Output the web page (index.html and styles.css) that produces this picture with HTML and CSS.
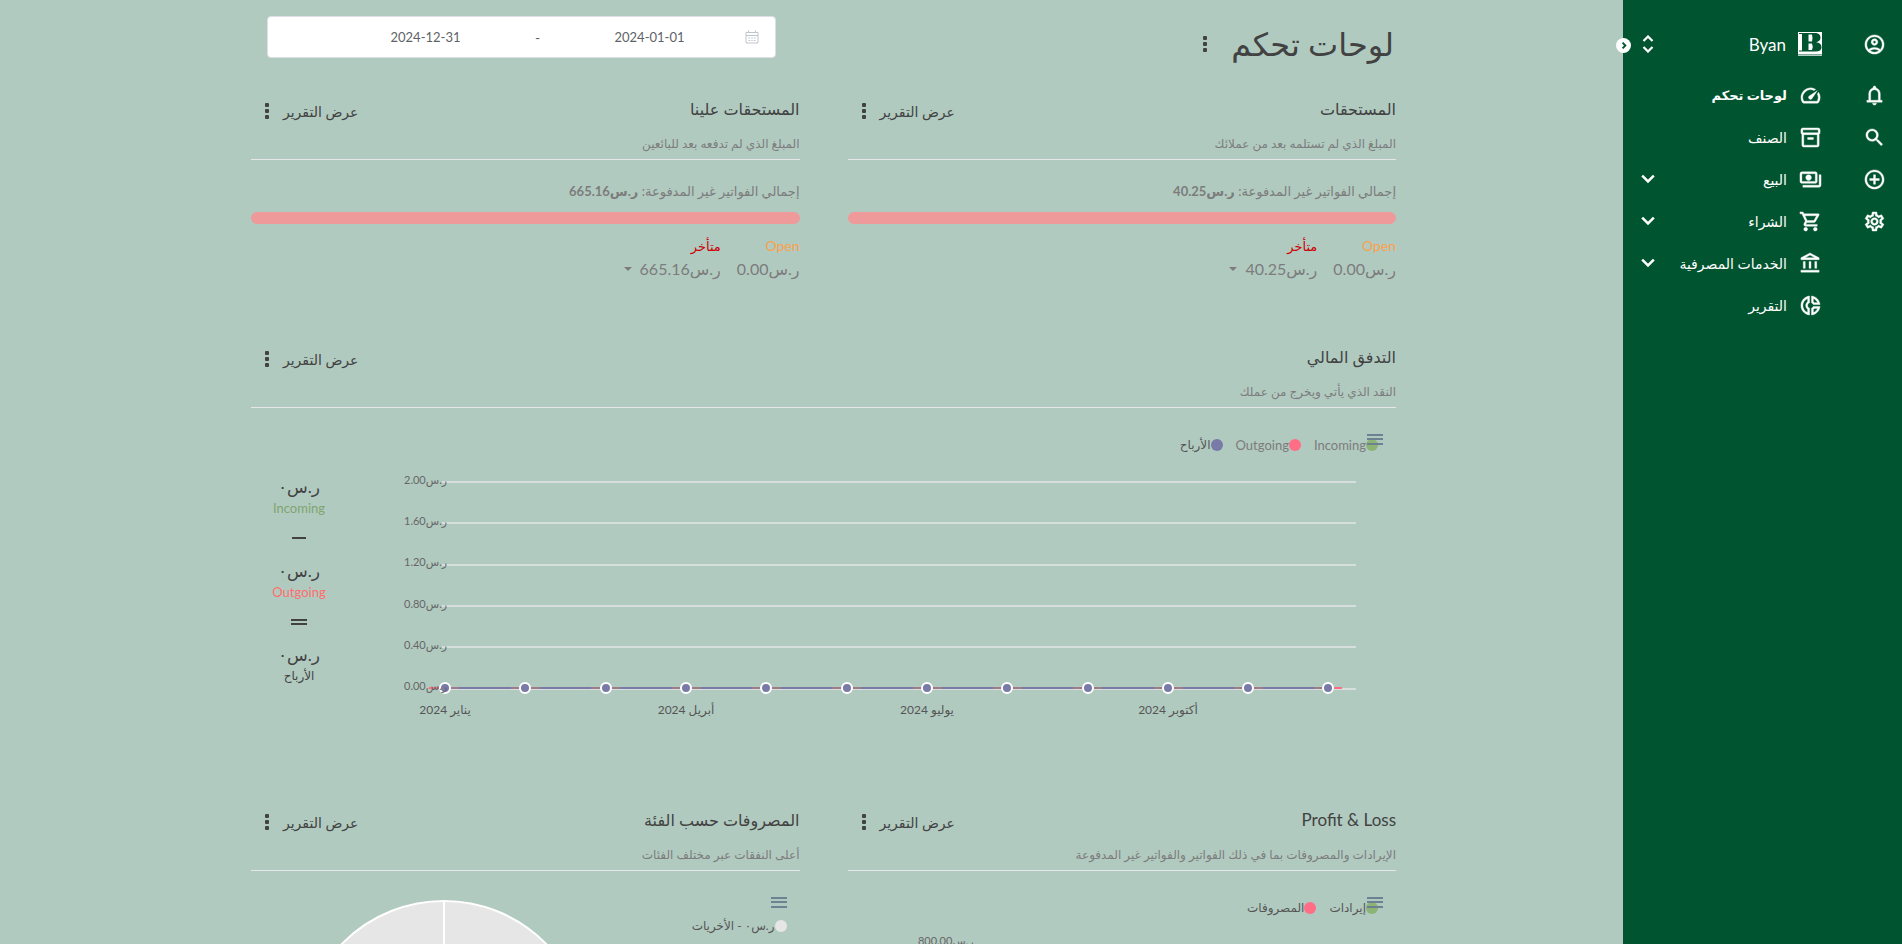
FILE: index.html
```html
<!DOCTYPE html>
<html lang="ar" dir="rtl">
<head>
<meta charset="utf-8">
<title>لوحات تحكم</title>
<link rel="stylesheet" href="styles.css">
</head>
<body>
<aside class="sidebar">
  <div class="rail">
    <button class="rail-btn account" aria-label="الحساب"><svg class="icon" viewBox="0 0 24 24"><path d="M12 2C6.48 2 2 6.48 2 12s4.48 10 10 10 10-4.48 10-10S17.52 2 12 2zM7.35 18.5C8.66 17.56 10.26 17 12 17s3.34.56 4.65 1.5c-1.31.94-2.91 1.5-4.65 1.5s-3.34-.56-4.65-1.5zm10.79-1.38C16.45 15.8 14.32 15 12 15s-4.45.8-6.14 2.12C4.7 15.73 4 13.95 4 12c0-4.42 3.58-8 8-8s8 3.58 8 8c0 1.95-.7 3.73-1.86 5.12zM12 6c-1.93 0-3.5 1.57-3.5 3.5S10.07 13 12 13s3.5-1.57 3.5-3.5S13.93 6 12 6zm0 5c-.83 0-1.5-.67-1.5-1.5S11.17 8 12 8s1.5.67 1.5 1.5S12.83 11 12 11z"/></svg></button>
    <button class="rail-btn" aria-label="الإشعارات"><svg class="icon" viewBox="0 0 24 24"><path d="M12 22c1.1 0 2-.9 2-2h-4c0 1.1.9 2 2 2zM18 17v-7c0-2.790-1.910-5.140-4.500-5.800V3.500c0-.83-.67-1.500-1.500-1.500s-1.500.67-1.500 1.500v.7C7.910 4.860 6 7.210 6 10v7H4v2h16v-2h-2zm-2 0H8v-7c0-2.210 1.790-4 4-4s4 1.790 4 4v7z"/></svg></button>
    <button class="rail-btn" aria-label="بحث"><svg class="icon" viewBox="0 0 24 24"><path d="M15.500 14h-.79l-.28-.27A6.471 6.471 0 0 0 16 9.500 6.500 6.500 0 1 0 9.500 16c1.610 0 3.090-.59 4.230-1.570l.27.280v.79l5 4.990L20.490 19l-4.990-5zm-6 0C7.010 14 5 11.990 5 9.500S7.010 5 9.500 5 14 7.010 14 9.500 11.990 14 9.500 14z"/></svg></button>
    <button class="rail-btn" aria-label="إضافة"><svg class="icon" viewBox="0 0 24 24"><path d="M13 7h-2v4H7v2h4v4h2v-4h4v-2h-4V7zm-1-5C6.480 2 2 6.480 2 12s4.480 10 10 10 10-4.480 10-10S17.520 2 12 2zm0 18c-4.410 0-8-3.590-8-8s3.590-8 8-8 8 3.590 8 8-3.590 8-8 8z"/></svg></button>
    <button class="rail-btn" aria-label="الإعدادات"><svg class="icon" viewBox="0 0 24 24"><path d="M19.430 12.980c.04-.32.07-.64.07-.98 0-.34-.03-.66-.07-.98l2.110-1.650c.19-.15.24-.42.12-.64l-2-3.460c-.09-.16-.26-.25-.44-.25-.06 0-.12.01-.17.03l-2.490 1c-.52-.4-1.080-.73-1.690-.98l-.38-2.650C14.460 2.180 14.250 2 14 2h-4c-.25 0-.46.18-.49.42l-.38 2.650c-.61.25-1.170.59-1.690.98l-2.490-1c-.06-.02-.12-.03-.18-.03-.17 0-.34.09-.43.25l-2 3.460c-.13.22-.07.49.12.64l2.110 1.650c-.04.32-.07.65-.07.98 0 .33.03.66.07.98l-2.110 1.650c-.19.15-.24.42-.12.64l2 3.460c.09.16.26.25.44.25.06 0 .12-.01.17-.03l2.490-1c.52.4 1.080.73 1.690.98l.38 2.650c.03.24.24.42.49.42h4c.25 0 .46-.18.49-.42l.38-2.650c.61-.25 1.170-.59 1.690-.98l2.490 1c.06.02.12.03.18.03.17 0 .34-.09.43-.25l2-3.460c.12-.22.07-.49-.12-.64l-2.110-1.650zm-1.980-1.710c.04.31.05.52.05.73 0 .21-.02.43-.05.73l-.14 1.130.89.7 1.080.84-.7 1.210-1.270-.51-1.040-.42-.9.68c-.43.32-.84.56-1.250.73l-1.060.43-.16 1.130-.2 1.350h-1.400l-.19-1.350-.16-1.130-1.060-.43c-.43-.18-.83-.41-1.230-.71l-.91-.7-1.060.43-1.270.51-.7-1.210 1.080-.84.89-.7-.14-1.130c-.03-.31-.05-.54-.05-.74s.02-.43.05-.73l.14-1.130-.89-.7-1.080-.84.7-1.210 1.270.51 1.040.42.9-.68c.43-.32.84-.56 1.250-.73l1.060-.43.16-1.130.2-1.350h1.390l.19 1.350.16 1.130 1.060.43c.43.18.83.41 1.230.71l.91.7 1.060-.43 1.270-.51.7 1.210-1.070.85-.89.7.14 1.130zM12 8c-2.210 0-4 1.790-4 4s1.790 4 4 4 4-1.790 4-4-1.790-4-4-4zm0 6c-1.100 0-2-.9-2-2s.9-2 2-2 2 .9 2 2-.9 2-2 2z"/></svg></button>
  </div>
  <div class="menu">
    <button class="company">
      <svg class="logo" viewBox="0 0 24 24"><path class="tile" d="M0 0H24V24H0z"/><path class="letter" d="M1 1H17C21 1 22.500 3.200 22.500 5.700S20.500 9.800 18 10.300C21.500 10.700 23.500 12.500 23.500 15.200S21.500 19.500 17.500 19.500H1V18.500H4V2H1z"/><path class="tile" d="M10.500 2.500H14Q15 6 14 9.500H10.500zM10.500 11.500H14Q15.500 15 14 18H10.500z"/><path class="letter" d="M0 22.500H24V23.300H0z"/></svg>
      <span class="company-name">Byan</span>
      <svg class="unfold" viewBox="0 0 24 24"><path d="M6 8l6-6 6 6M6 16l6 6 6-6"/></svg>
    </button>
    <nav class="nav">
      <a class="nav-link current" href="#"><svg class="icon" viewBox="0 0 24 24"><path d="M20.380 8.570l-1.230 1.850a8 8 0 0 1-.22 7.580H5.070A8 8 0 0 1 15.580 6.850l1.850-1.230A10 10 0 0 0 3.350 19a2 2 0 0 0 1.720 1h13.850a2 2 0 0 0 1.740-1 10 10 0 0 0-.27-10.440zm-9.790 6.840a2 2 0 0 0 2.830 0l5.660-8.490-8.490 5.660a2 2 0 0 0 0 2.830z"/></svg><span>لوحات تحكم</span></a>
      <a class="nav-link" href="#"><svg class="icon" viewBox="0 0 24 24"><path d="M20 2H4c-1 0-2 .9-2 2v3.010c0 .72.43 1.340 1 1.690V20c0 1.100 1.100 2 2 2h14c.9 0 2-.9 2-2V8.700c.57-.35 1-.97 1-1.690V4c0-1.100-1-2-2-2zm-1 18H5V9h14v11zm1-13H4V4h16v3zM9 12h6v2H9z"/></svg><span>الصنف</span></a>
      <a class="nav-link" href="#"><svg class="icon" viewBox="0 0 24 24"><path d="M19 14V6c0-1.100-.9-2-2-2H3c-1.100 0-2 .9-2 2v8c0 1.100.9 2 2 2h14c1.100 0 2-.9 2-2zm-2 0H3V6h14v8zm-7-7c-1.660 0-3 1.340-3 3s1.340 3 3 3 3-1.340 3-3-1.340-3-3-3zm13 0v11c0 1.100-.9 2-2 2H4v-2h17V7h2z"/></svg><span>البيع</span><svg class="chevron" viewBox="0 0 24 24"><path d="M5 8l7 7 7-7"/></svg></a>
      <a class="nav-link" href="#"><svg class="icon" viewBox="0 0 24 24"><path d="M15.550 13c.75 0 1.410-.41 1.750-1.030l3.580-6.490A.996.996 0 0 0 20.010 4H5.210l-.94-2H1v2h2l3.600 7.590-1.350 2.440C4.520 15.370 5.480 17 7 17h12v-2H7l1.100-2h7.450zM6.160 6h12.150l-2.760 5H8.530L6.160 6zM7 18c-1.100 0-1.990.9-1.990 2S5.900 22 7 22s2-.9 2-2-.9-2-2-2zm10 0c-1.100 0-1.990.9-1.990 2s.89 2 1.990 2 2-.9 2-2-.9-2-2-2z"/></svg><span>الشراء</span><svg class="chevron" viewBox="0 0 24 24"><path d="M5 8l7 7 7-7"/></svg></a>
      <a class="nav-link" href="#"><svg class="icon" viewBox="0 0 24 24"><path d="M6.500 10h-2v7h2v-7zm6 0h-2v7h2v-7zm8.500 9H2v2h19v-2zm-2.500-9h-2v7h2v-7zm-7-6.740L16.710 6H6.290l5.210-2.740m0-2.260L2 6v2h19V6l-9.500-5z"/></svg><span>الخدمات المصرفية</span><svg class="chevron" viewBox="0 0 24 24"><path d="M5 8l7 7 7-7"/></svg></a>
      <a class="nav-link" href="#"><svg class="icon" viewBox="0 0 24 24"><path d="M14.820 11h7.130c-.47-4.720-4.230-8.480-8.950-8.950v7.130c.85.31 1.510.97 1.820 1.820zM15 4.580C17 5.400 18.600 7 19.420 9h-3.430c-.28-.37-.62-.71-.99-.99V4.580zM2 12c0 5.190 3.950 9.450 9 9.950v-7.130C9.840 14.400 9 13.300 9 12c0-1.300.84-2.400 2-2.820V2.050c-5.050.5-9 4.760-9 9.950zm7-7.420v3.440c-1.230.92-2 2.390-2 3.980 0 1.590.77 3.060 2 3.990v3.440C6.040 18.240 4 15.350 4 12c0-3.350 2.040-6.240 5-7.420zm4 10.240v7.130c4.720-.47 8.480-4.230 8.950-8.950h-7.130c-.31.85-.97 1.510-1.820 1.820zm2 1.170c.37-.28.71-.61.99-.99h3.430C18.600 17 17 18.600 15 19.420v-3.430z"/></svg><span>التقرير</span></a>
    </nav>
  </div>
  <button class="collapse" aria-label="طي القائمة"><svg viewBox="0 0 16 16"><path d="M7 5l3 3-3 3"/></svg></button>
</aside>

<main class="page">
  <header class="page-head">
    <div class="title-wrap">
      <h1>لوحات تحكم</h1>
      <button class="dots" aria-label="المزيد"></button>
    </div>
    <div class="range-wrap">
      <div class="range">
        <svg class="calendar" viewBox="0 0 14 14"><path d="M1 2.500H13V13H1zM1 5.500H13M3.500 .5V3M10.500 .5V3M3.500 8H5M6.250 8H7.750M9 8H10.500M3.500 10.500H5M6.250 10.500H7.750M9 10.500H10.500"/></svg>
        <input type="text" value="2024-01-01" aria-label="تاريخ البداية">
        <span>-</span>
        <input type="text" value="2024-12-31" aria-label="تاريخ النهاية">
      </div>
    </div>
  </header>

  <div class="widgets">
    <section class="widget dues">
      <div class="widget-head">
        <h2>المستحقات</h2>
        <div class="actions"><a href="#">عرض التقرير</a><button class="dots" aria-label="المزيد"></button></div>
        <p>المبلغ الذي لم تستلمه بعد من عملائك</p>
      </div>
      <p class="total">إجمالي الفواتير غير المدفوعة: <b>ر.س40.25</b></p>
      <div class="bar"></div>
      <div class="amounts">
        <div><span class="open">Open</span><span class="money">ر.س0.00</span></div>
        <div><span class="late">متأخر</span><button class="money drop">ر.س40.25</button></div>
      </div>
    </section>
    <section class="widget dues">
      <div class="widget-head">
        <h2>المستحقات علينا</h2>
        <div class="actions"><a href="#">عرض التقرير</a><button class="dots" aria-label="المزيد"></button></div>
        <p>المبلغ الذي لم تدفعه بعد للبائعين</p>
      </div>
      <p class="total">إجمالي الفواتير غير المدفوعة: <b>ر.س665.16</b></p>
      <div class="bar"></div>
      <div class="amounts">
        <div><span class="open">Open</span><span class="money">ر.س0.00</span></div>
        <div><span class="late">متأخر</span><button class="money drop">ر.س665.16</button></div>
      </div>
    </section>

    <section class="widget flow">
      <div class="widget-head">
        <h2>التدفق المالي</h2>
        <div class="actions"><a href="#">عرض التقرير</a><button class="dots" aria-label="المزيد"></button></div>
        <p>النقد الذي يأتي ويخرج من عملك</p>
      </div>
      <div class="flow-body">
        <div class="chart">
          <div class="legend-row">
            <button class="burger" aria-label="قائمة الرسم"></button>
            <ul class="legend">
              <li><i class="dot green"></i>Incoming</li>
              <li><i class="dot pink"></i>Outgoing</li>
              <li class="dark"><i class="dot violet"></i>الأرباح</li>
            </ul>
          </div>
          <svg class="plot" viewBox="0 0 1001 260" direction="ltr">
            <g class="grid"><path d="M47 23H961M47 64H961M47 106H961M47 147H961M47 188H961M47 230H961"/></g>
            <path class="line-out" d="M34 229H947"/>
            <path class="line-profit" d="M50 229H934"/>
            <path class="overlap" d="M50 229H64M116 229H145M196 229H225M277 229H306M357 229H386M437 229H466M518 229H547M598 229H627M678 229H707M759 229H788M839 229H868M919 229H934"/>
            <g class="marks"><circle cx="50" cy="229" r="5"/><circle cx="130" cy="229" r="5"/><circle cx="211" cy="229" r="5"/><circle cx="291" cy="229" r="5"/><circle cx="371" cy="229" r="5"/><circle cx="452" cy="229" r="5"/><circle cx="532" cy="229" r="5"/><circle cx="612" cy="229" r="5"/><circle cx="693" cy="229" r="5"/><circle cx="773" cy="229" r="5"/><circle cx="853" cy="229" r="5"/><circle cx="933" cy="229" r="5"/></g>
            <g class="y-labels"><text x="9" y="25">2.00ر.س</text><text x="9" y="66">1.60ر.س</text><text x="9" y="107">1.20ر.س</text><text x="9" y="149">0.80ر.س</text><text x="9" y="190">0.40ر.س</text><text x="9" y="231">0.00ر.س</text></g>
            <g class="x-labels"><text x="50" y="255">يناير 2024</text><text x="291" y="255">أبريل 2024</text><text x="532" y="255">يوليو 2024</text><text x="773" y="255">أكتوبر 2024</text></g>
          </svg>
        </div>
        <div class="sums">
          <div class="sum"><strong>ر.س٠</strong><span class="in">Incoming</span></div>
          <div class="minus"></div>
          <div class="sum"><strong>ر.س٠</strong><span class="out">Outgoing</span></div>
          <div class="equals"></div>
          <div class="sum"><strong>ر.س٠</strong><span class="net">الأرباح</span></div>
        </div>
      </div>
    </section>

    <section class="widget">
      <div class="widget-head">
        <h2 class="latin">Profit &amp; Loss</h2>
        <div class="actions"><a href="#">عرض التقرير</a><button class="dots" aria-label="المزيد"></button></div>
        <p>الإيرادات والمصروفات بما في ذلك الفواتير والفواتير غير المدفوعة</p>
      </div>
      <div class="legend-row">
        <button class="burger" aria-label="قائمة الرسم"></button>
        <ul class="legend">
          <li class="dark"><i class="dot green"></i>إيرادات</li>
          <li class="dark"><i class="dot pink"></i>المصروفات</li>
        </ul>
      </div>
      <svg class="bars" viewBox="0 0 549 200" direction="ltr"><g class="y-labels"><text x="70" y="27">800.00ر.س</text></g></svg>
    </section>
    <section class="widget">
      <div class="widget-head">
        <h2>المصروفات حسب الفئة</h2>
        <div class="actions"><a href="#">عرض التقرير</a><button class="dots" aria-label="المزيد"></button></div>
        <p>أعلى النفقات عبر مختلف الفئات</p>
      </div>
      <div class="donut-body">
        <div class="donut-legend">
          <button class="burger" aria-label="قائمة الرسم"></button>
          <ul class="legend"><li class="dark"><i class="dot grey"></i>ر.س٠ - الأخريات</li></ul>
        </div>
        <svg class="pie" viewBox="0 0 290 290"><circle cx="145" cy="145" r="143"/><path d="M145 145V2"/></svg>
      </div>
    </section>
  </div>
</main>
</body>
</html>
```
FILE: styles.css
```css
* { box-sizing: border-box; }
html, body { height: 100%; }
body {
  margin: 0;
  display: flex;
  overflow: hidden;
  background: #b1cac0;
  color: #424242;
  font-family: Lato, "DejaVu Sans", sans-serif;
  font-size: 14px;
}
h1, h2, p, ul { margin: 0; padding: 0; font-weight: 400; }
ul { list-style: none; }
a { color: inherit; text-decoration: none; }
button { border: 0; padding: 0; background: none; color: inherit; font: inherit; cursor: pointer; }

.sidebar {
  position: relative;
  flex: none;
  width: 279px;
  display: flex;
  background: #00542f;
  color: #fff;
}
.rail { width: 55px; display: flex; flex-direction: column; align-items: center; padding-top: 24px; }
.rail-btn { height: 42px; display: flex; align-items: center; }
.rail-btn.account { height: 40px; margin-bottom: 10px; }
.icon { width: 23px; height: 23px; fill: #fff; stroke: #fff; stroke-width: .4; flex: none; }
.menu { flex: 1; padding: 24px 25px 0 12px; }
.company { width: 100%; height: 40px; display: flex; align-items: center; gap: 12px; padding-left: 4px; font-size: 17px; margin-bottom: 10px; }
.logo { width: 24px; height: 24px; }
.tile { fill: #fff; }
.letter { fill: #00542f; }
.unfold { width: 18px; height: 18px; margin-inline-start: auto; fill: none; stroke: #fff; stroke-width: 3; }
.nav-link { height: 42px; display: flex; align-items: center; gap: 12px; font-size: 14px; }
.current { font-size: 13px; font-weight: 700; }
.chevron { width: 20px; height: 20px; margin-right: auto; margin-left: 3px; fill: none; stroke: #fff; stroke-width: 3; }
.collapse {
  position: absolute;
  left: -7px;
  top: 38px;
  width: 15px;
  height: 15px;
  border-radius: 50%;
  background: #fff;
}
.collapse svg { display: block; fill: none; stroke: #00542f; stroke-width: 2; }

.page { flex: 1; min-width: 0; padding: 0 24px 0 48px; }
.page-head, .widgets {
  max-width: 1145px;
  margin: 0 auto;
  display: grid;
  grid-template-columns: 1fr 1fr;
  column-gap: 48px;
}
.page-head { height: 86px; align-items: start; }
.title-wrap { display: flex; align-items: center; gap: 18px; padding: 16px 2px 0 0; }
h1 { font-size: 32px; line-height: 56px; }
.dots {
  width: 16px;
  height: 18px;
  background: radial-gradient(circle at center, #424242 2px, transparent 2.5px) center / 6px 6px repeat-y;
}
.range-wrap { padding: 16px 24px 0 16px; }
.range { height: 42px; display: flex; align-items: center; padding: 0 16px; background: #fff; border: 1px solid #dcdfe6; border-radius: 4px; color: #606266; }
.range input { flex: 0 1 190px; min-width: 0; border: 0; text-align: center; font: inherit; font-size: 13px; color: inherit; background: none; }
.range span { flex: none; width: 34px; text-align: center; }
.calendar { width: 14px; height: 14px; fill: none; stroke: #c0c4cc; }

.widget-head {
  display: grid;
  grid-template-columns: 1fr auto;
  grid-template-rows: 42px 31px;
  border-bottom: 1px solid #e5e7eb;
}
.widget-head h2 { padding-top: 2px; font-size: 16px; line-height: 42px; }
.widget-head .latin { font-size: 17px; }
.widget-head p { grid-column: 1 / 3; font-size: 12px; line-height: 32px; color: #7c7c7c; }
.actions { display: flex; align-items: center; gap: 8px; padding: 8px 0 0 8px; }
.dues { height: 248px; }
.total { margin-top: 18px; font-size: 13px; line-height: 26px; color: #7c7c7c; }
.bar { height: 12px; margin-top: 8px; border-radius: 6px; background: #ef9a9a; }
.amounts { display: flex; gap: 16px; margin-top: 11px; color: #7c7c7c; }
.amounts > div { display: flex; flex-direction: column; align-items: flex-start; }
.open, .late { line-height: 22px; }
.open { color: #fba14b; }
.late { font-size: 13px; color: #c00; }
.money { font-size: 16px; line-height: 24px; }
.drop { display: flex; align-items: center; gap: 8px; }
.drop::after { content: ""; border: 4px solid transparent; border-top-color: #7c7c7c; border-bottom: 0; }

.flow { grid-column: 1 / 3; height: 463px; }
.flow-body { display: flex; }
.chart { flex: 1; min-width: 0; }
.legend-row { position: relative; padding: 27px 18px 0 0; }
.burger {
  position: absolute;
  top: 26px;
  right: 13px;
  z-index: 1;
  width: 16px;
  height: 11px;
  background: linear-gradient(#6e8192 2px, transparent 2px, transparent 4px, #6e8192 4px, #6e8192 6px, transparent 6px, transparent 9px, #6e8192 9px);
}
.legend { display: flex; gap: 13px; font-size: 13px; line-height: 20px; color: #7c7c7c; }
.legend li { display: flex; align-items: center; }
.legend .dark { font-size: 12px; color: #555; }
.dot { width: 12px; height: 12px; border-radius: 50%; }
.green { background: #8bb475; }
.pink { background: #ff6e85; }
.violet { background: #797aa6; }
.grey { background: #e6e6e6; }
.plot, .bars { display: block; width: 100%; overflow: visible; }
.plot { margin-top: 4px; }
.grid path { stroke: #d6dfdd; stroke-width: 2; fill: none; }
.line-out { stroke: #ff6e85; stroke-width: 2; }
.line-profit { stroke: #797aa6; stroke-width: 2; }
.overlap { stroke: #a07c88; stroke-width: 2; }
.marks circle { fill: #797aa6; stroke: #fff; stroke-width: 2; }
.y-labels { font-size: 11px; fill: #666; }
.x-labels { font-size: 12px; fill: #555; text-anchor: middle; }
.sums { flex: none; width: 144px; display: flex; flex-direction: column; align-items: center; padding: 67px 48px 0 0; }
.sum { display: flex; flex-direction: column; align-items: center; height: 42px; }
.sum strong { font-size: 17px; font-weight: 400; line-height: 24px; }
.sum span { font-size: 13px; line-height: 18px; }
.sum .net { font-size: 12px; }
.in { color: #7fa56e; }
.out { color: #ff6e6e; }
.minus { width: 14px; height: 2px; margin: 20px 0; background: #424242; }
.equals { width: 16px; height: 6px; margin: 18px 0; border: solid #424242; border-width: 2px 0; }

.donut-body { display: flex; }
.donut-legend { position: relative; flex: 1; padding: 45px 13px 0 0; }
.pie { flex: none; width: 290px; height: 290px; margin: 28px 0 0 48px; fill: #e6e6e6; stroke: #fff; stroke-width: 2; }
```
